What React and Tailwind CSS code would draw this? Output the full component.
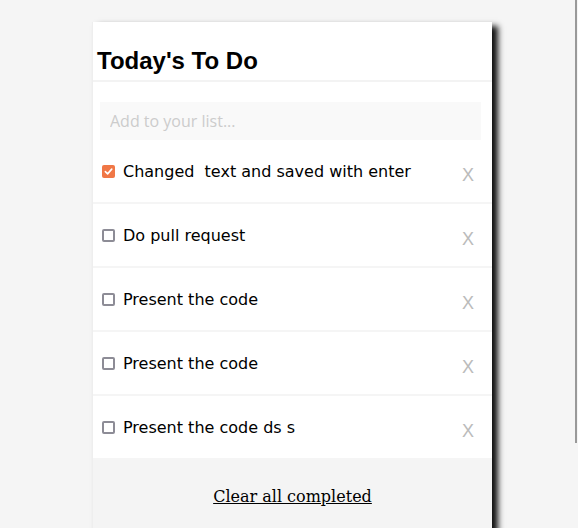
import React, { useState } from 'react';

const initial = [
  { id: 1, text: 'Changed  text and saved with enter', done: true },
  { id: 2, text: 'Do pull request', done: false },
  { id: 3, text: 'Present the code', done: false },
  { id: 4, text: 'Present the code', done: false },
  { id: 5, text: 'Present the code ds s', done: false },
];

function Check({ checked, onChange }) {
  return (
    <button
      onClick={onChange}
      className={
        'w-[13px] h-[13px] rounded-[2px] flex items-center justify-center shrink-0 mt-[1px] ' +
        (checked ? 'bg-[#f07746]' : 'border-2 border-[#8d8c96] bg-white')
      }
    >
      {checked && (
        <svg width="9" height="9" viewBox="0 0 10 10" fill="none">
          <path d="M1.5 5.2 L4 7.6 L8.6 2.4" stroke="white" strokeWidth="1.8" strokeLinecap="round" strokeLinejoin="round" />
        </svg>
      )}
    </button>
  );
}

function TodoRow({ item, onToggle, onRemove }) {
  return (
    <li className="h-[64px] flex items-center border-b-2 border-[#f5f5f5] pl-[9px] pr-[18px]">
      <Check checked={item.done} onChange={onToggle} />
      <span className="ml-[8px] mt-[2px] flex-1 whitespace-pre text-[16px] leading-[20px] text-black font-['DejaVu_Sans',sans-serif]">
        {item.text}
      </span>
      <button onClick={onRemove} className="mt-[8px] text-[18px] leading-[20px] text-[#bbbbbb] font-['Liberation_Sans',Arial,sans-serif]">
        X
      </button>
    </li>
  );
}

export default function App() {
  const [items, setItems] = useState(initial);
  const [draft, setDraft] = useState('');

  const toggle = id => setItems(items.map(i => (i.id === id ? { ...i, done: !i.done } : i)));
  const remove = id => setItems(items.filter(i => i.id !== id));

  return (
    <div className="h-[528px] overflow-hidden bg-[#f5f5f5] relative">
      <div className="ml-[92px] mt-[22px] w-[400px] bg-white shadow-[6px_4px_6px_#111] border-l border-[#eeeeee]">
        {/* Header */}
        <div className="h-[60px] border-b-2 border-[#f3f3f3] pl-[4px] flex items-end pb-[5px]">
          <h1 className="text-[24px] leading-[28px] font-bold text-black font-['Liberation_Sans',Arial,sans-serif]">
            Today's To Do
          </h1>
        </div>
        {/* Input */}
        <div className="pl-[7px] pr-[11px] pt-[20px]">
          <input
            value={draft}
            onChange={e => setDraft(e.target.value)}
            placeholder="Add to your list..."
            className="w-full h-[38px] bg-[#f9f9f9] px-[10px] text-[16px] outline-none placeholder:text-[#cccccc] font-['Open_Sans',sans-serif]"
          />
        </div>
        <ul>
          {items.map(item => (
            <TodoRow key={item.id} item={item} onToggle={() => toggle(item.id)} onRemove={() => remove(item.id)} />
          ))}
        </ul>
        {/* Footer */}
        <div className="bg-[#f4f4f4] pt-[24px] pb-[60px] text-center">
          <button className="text-[16px] leading-[22px] underline text-black font-['DejaVu_Serif',serif]">
            Clear all completed
          </button>
        </div>
      </div>
      <div className="absolute right-[1px] top-0 w-[2px] h-[443px] bg-[#999999]" />
    </div>
  );
}
